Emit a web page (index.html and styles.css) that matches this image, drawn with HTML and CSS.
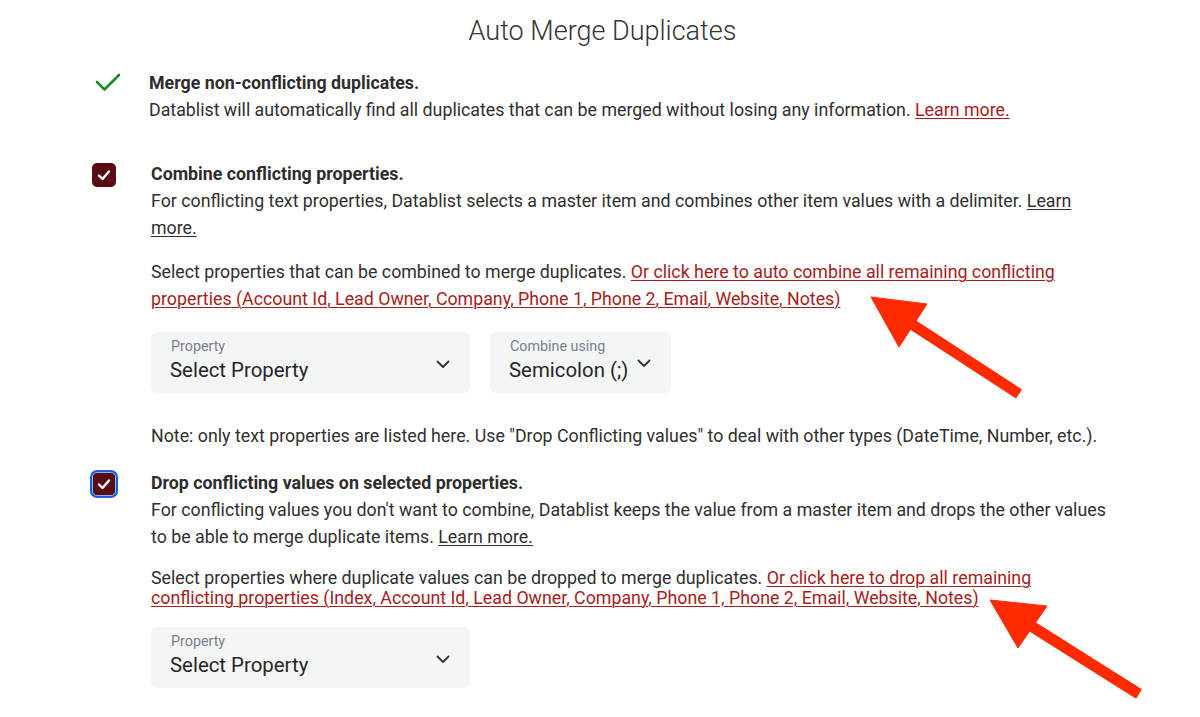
FILE: index.html
```html
<!DOCTYPE html>
<html>
<head>
<meta charset="utf-8">
<link rel="stylesheet" href="styles.css">
</head>
<body>
<div class="page">
  <h1 class="title">Auto Merge Duplicates</h1>

  <section class="opt opt-first">
    <div class="opt-icon">
      <svg class="tick" width="26" height="20" viewBox="0 0 26 20"><polyline points="2,9 9.5,16.5 24,2" fill="none" stroke="#1f8a24" stroke-width="2.6" stroke-linecap="round" stroke-linejoin="round"/></svg>
    </div>
    <div class="opt-body">
      <div class="opt-title">Merge non-conflicting duplicates.</div>
      <div class="txt">Datablist will automatically find all duplicates that can be merged without losing any information. <a class="red">Learn more.</a></div>
    </div>
  </section>

  <section class="opt opt-combine">
    <div class="opt-icon">
      <span class="cb"><svg width="14" height="12" viewBox="0 0 14 12"><polyline points="2,6.5 5.5,10 12,2.5" fill="none" stroke="#fff" stroke-width="2.4" stroke-linecap="round" stroke-linejoin="round"/></svg></span>
    </div>
    <div class="opt-body">
      <div class="opt-title">Combine conflicting properties.</div>
      <div class="txt">For conflicting text properties, Datablist selects a master item and combines other item values with a delimiter. <a class="dark">Learn more.</a></div>
      <div class="txt para">Select properties that can be combined to merge duplicates. <a class="red">Or click here to auto combine all remaining conflicting properties (Account Id, Lead Owner, Company, Phone 1, Phone 2, Email, Website, Notes)</a></div>
      <div class="selects">
        <div class="sel sel-wide">
          <div class="sel-text"><div class="sel-label">Property</div><div class="sel-value">Select Property</div></div>
          <svg class="chev" width="14" height="9" viewBox="0 0 14 9"><polyline points="1.5,1.5 7,7 12.5,1.5" fill="none" stroke="#333" stroke-width="1.8" stroke-linecap="round" stroke-linejoin="round"/></svg>
        </div>
        <div class="sel sel-narrow">
          <div class="sel-text"><div class="sel-label">Combine using</div><div class="sel-value">Semicolon (;)</div></div>
          <svg class="chev chev-up" width="14" height="9" viewBox="0 0 14 9"><polyline points="1.5,1.5 7,7 12.5,1.5" fill="none" stroke="#333" stroke-width="1.8" stroke-linecap="round" stroke-linejoin="round"/></svg>
        </div>
      </div>
      <div class="txt note">Note: only text properties are listed here. Use "Drop Conflicting values" to deal with other types (DateTime, Number, etc.).</div>
    </div>
  </section>

  <section class="opt opt-drop">
    <div class="opt-icon">
      <span class="cb cb-focus"><svg width="14" height="12" viewBox="0 0 14 12"><polyline points="2,6.5 5.5,10 12,2.5" fill="none" stroke="#fff" stroke-width="2.4" stroke-linecap="round" stroke-linejoin="round"/></svg></span>
    </div>
    <div class="opt-body">
      <div class="opt-title">Drop conflicting values on selected properties.</div>
      <div class="txt">For conflicting values you don't want to combine, Datablist keeps the value from a master item and drops the other values to be able to merge duplicate items. <a class="dark">Learn more.</a></div>
      <div class="txt para tight">Select properties where duplicate values can be dropped to merge duplicates. <a class="red">Or click here to drop all remaining conflicting properties (Index, Account Id, Lead Owner, Company, Phone 1, Phone 2, Email, Website, Notes)</a></div>
      <div class="selects">
        <div class="sel sel-wide">
          <div class="sel-text"><div class="sel-label">Property</div><div class="sel-value">Select Property</div></div>
          <svg class="chev" width="14" height="9" viewBox="0 0 14 9"><polyline points="1.5,1.5 7,7 12.5,1.5" fill="none" stroke="#333" stroke-width="1.8" stroke-linecap="round" stroke-linejoin="round"/></svg>
        </div>
      </div>
    </div>
  </section>

  <svg class="annot" width="1200" height="717" viewBox="0 0 1200 717">
    <g fill="#ff2a00" stroke="#ff2a00">
      <polygon points="871,297 927,304 899,347" stroke-width="1"/>
      <line x1="910" y1="323" x2="1019" y2="394" stroke-width="11"/>
      <polygon points="990,600 1047,606 1018,648" stroke-width="1"/>
      <line x1="1028" y1="624" x2="1139" y2="694" stroke-width="11"/>
    </g>
  </svg>
</div>
</body>
</html>
```

FILE: styles.css
```css
* { box-sizing: border-box; }
html, body { margin: 0; padding: 0; background: #fff; }
body {
  font-family: Roboto, "Liberation Sans", Arial, sans-serif;
  color: #2f2f2f;
  font-size: 17.8px;
}
.page {
  position: relative;
  width: 1200px;
  height: 717px;
  overflow: hidden;
}
.title {
  margin: 14px 0 0;
  text-align: center;
  font-size: 27px;
  font-weight: 300;
  line-height: 34px;
  color: #333;
  padding-left: 5px;
}
.opt {
  display: flex;
  align-items: flex-start;
}
.opt-first { margin-top: 21px; }
.opt-combine { margin-top: 37px; }
.opt-drop { margin-top: 20px; }
.opt-icon {
  width: 151px;
  flex: none;
  display: flex;
  justify-content: flex-start;
}
.opt-first .opt-icon { width: 149px; padding-left: 95px; padding-top: 4px; }
.opt-combine .opt-icon, .opt-drop .opt-icon { padding-left: 92px; padding-top: 2.5px; }
.tick { display: block; }
.opt-body { width: 965px; }
.opt-title {
  font-weight: 700;
  line-height: 27px;
  color: #2d2d2d;
}
.txt { line-height: 27px; }
.para { margin-top: 17px; }
.para.tight { line-height: 20px; margin-top: 17.5px; }
a { cursor: pointer; text-decoration: underline; text-underline-offset: 2px; text-decoration-thickness: 1px; }
a.red { color: #a51d1d; }
a.dark { color: #2f2f2f; }
.cb {
  width: 24px;
  height: 24px;
  border-radius: 5px;
  background: #5a0c15;
  display: flex;
  align-items: center;
  justify-content: center;
}
.cb-focus {
  box-shadow: 0 0 0 2px #1b5fd6;
  border: 1.5px solid #8fb3f0;
}
.selects {
  display: flex;
  gap: 20px;
  margin-top: 19.5px;
}
.sel {
  height: 61px;
  background: #f4f5f5;
  border-radius: 6px;
  display: flex;
  align-items: flex-start;
  padding: 5px 20px 0 19px;
}
.sel-wide { width: 319px; justify-content: space-between; }
.sel-narrow { gap: 9px; }
.sel-label {
  font-size: 14.3px;
  line-height: 18px;
  color: #7a808c;
  padding-left: 1px;
}
.sel-value {
  font-size: 20.4px;
  line-height: 30px;
  color: #262626;
}
.chev { margin-top: 23px; flex: none; }
.chev-up { margin-top: 22px; }
.note { margin-top: 29.5px; }
.annot {
  position: absolute;
  left: 0;
  top: 0;
  pointer-events: none;
}
```
